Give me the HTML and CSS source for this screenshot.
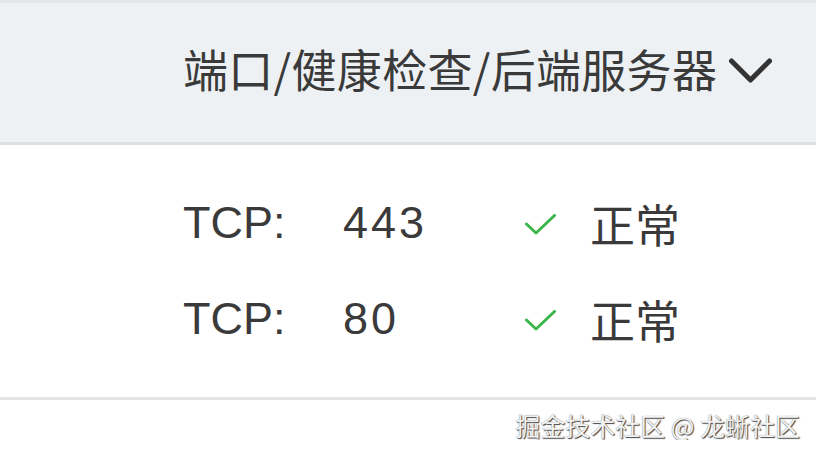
FILE: index.html
```html
<!DOCTYPE html>
<html lang="zh-CN">
  <head>
    <meta charset="UTF-8" />
    <meta name="viewport" content="width=device-width, initial-scale=1.0" />
    <link rel="stylesheet" href="styles.css">
    <title>端口/健康检查</title>
  </head>
  <body>
    <div class="col-header">
      <span class="col-title">端口/健康检查/后端服务器</span>
      <svg class="chevron" width="43" height="26" viewBox="0 0 43 26">
        <polyline points="2.5,3 21.5,22 40.5,3" fill="none" stroke="#333" stroke-width="5" stroke-linecap="round" stroke-linejoin="round" />
      </svg>
    </div>

    <div class="port-list">
      <div class="port-row">
        <span class="proto">TCP:</span>
        <span class="port">443</span>
        <svg class="check" width="31" height="21" viewBox="0 0 31 21">
          <polyline points="1.5,10 11,19 29.5,1.5" fill="none" stroke="#3cb64b" stroke-width="3" stroke-linecap="round" stroke-linejoin="round" />
        </svg>
        <span class="status">正常</span>
      </div>
      <div class="port-row">
        <span class="proto">TCP:</span>
        <span class="port">80</span>
        <svg class="check" width="31" height="21" viewBox="0 0 31 21">
          <polyline points="1.5,10 11,19 29.5,1.5" fill="none" stroke="#3cb64b" stroke-width="3" stroke-linecap="round" stroke-linejoin="round" />
        </svg>
        <span class="status">正常</span>
      </div>
    </div>

    <div class="footer">
      <span class="mark">掘金技术社区 @ 龙蜥社区</span>
    </div>
  </body>
</html>
```

FILE: styles.css
```css
body {
  margin: 0;
  background-color: white;
  font-family: "Liberation Sans", "Noto Sans CJK SC", sans-serif;
  color: #3a3a3a;
}

.col-header {
  display: flex;
  align-items: center;
  height: 139px;
  padding-left: 183px;
  background-color: #eef1f4;
  border-top: 3px solid #e4e7ea;
  border-bottom: 3px solid #dcdee1;
}

.col-title {
  font-family: "Noto Sans CJK SC", sans-serif;
  font-size: 45px;
  line-height: 1;
  letter-spacing: 0.3px;
  color: #3a3a3a;
  margin-top: -8px;
}

.chevron {
  margin-left: 12px;
  margin-top: -3px;
}

.port-list {
  padding: 30px 0 30px 183px;
  border-bottom: 3px solid #e4e4e4;
}

.port-row {
  display: grid;
  grid-template-columns: 160px 182px 65px auto;
  align-items: center;
  height: 96px;
  font-size: 45px;
}

.port {
  letter-spacing: 3px;
}

.check {
  margin-top: 2px;
}

.status {
  font-family: "Noto Sans CJK SC", sans-serif;
  line-height: 1;
}

.footer {
  display: flex;
  justify-content: flex-end;
  padding: 10px 16px 0 0;
}

.mark {
  font-family: "Noto Sans CJK SC", sans-serif;
  font-size: 25px;
  line-height: 1.2;
  color: #f2f2f2;
  text-shadow: 1px 1px 1px #444, 0 0 1px #777;
}
```
